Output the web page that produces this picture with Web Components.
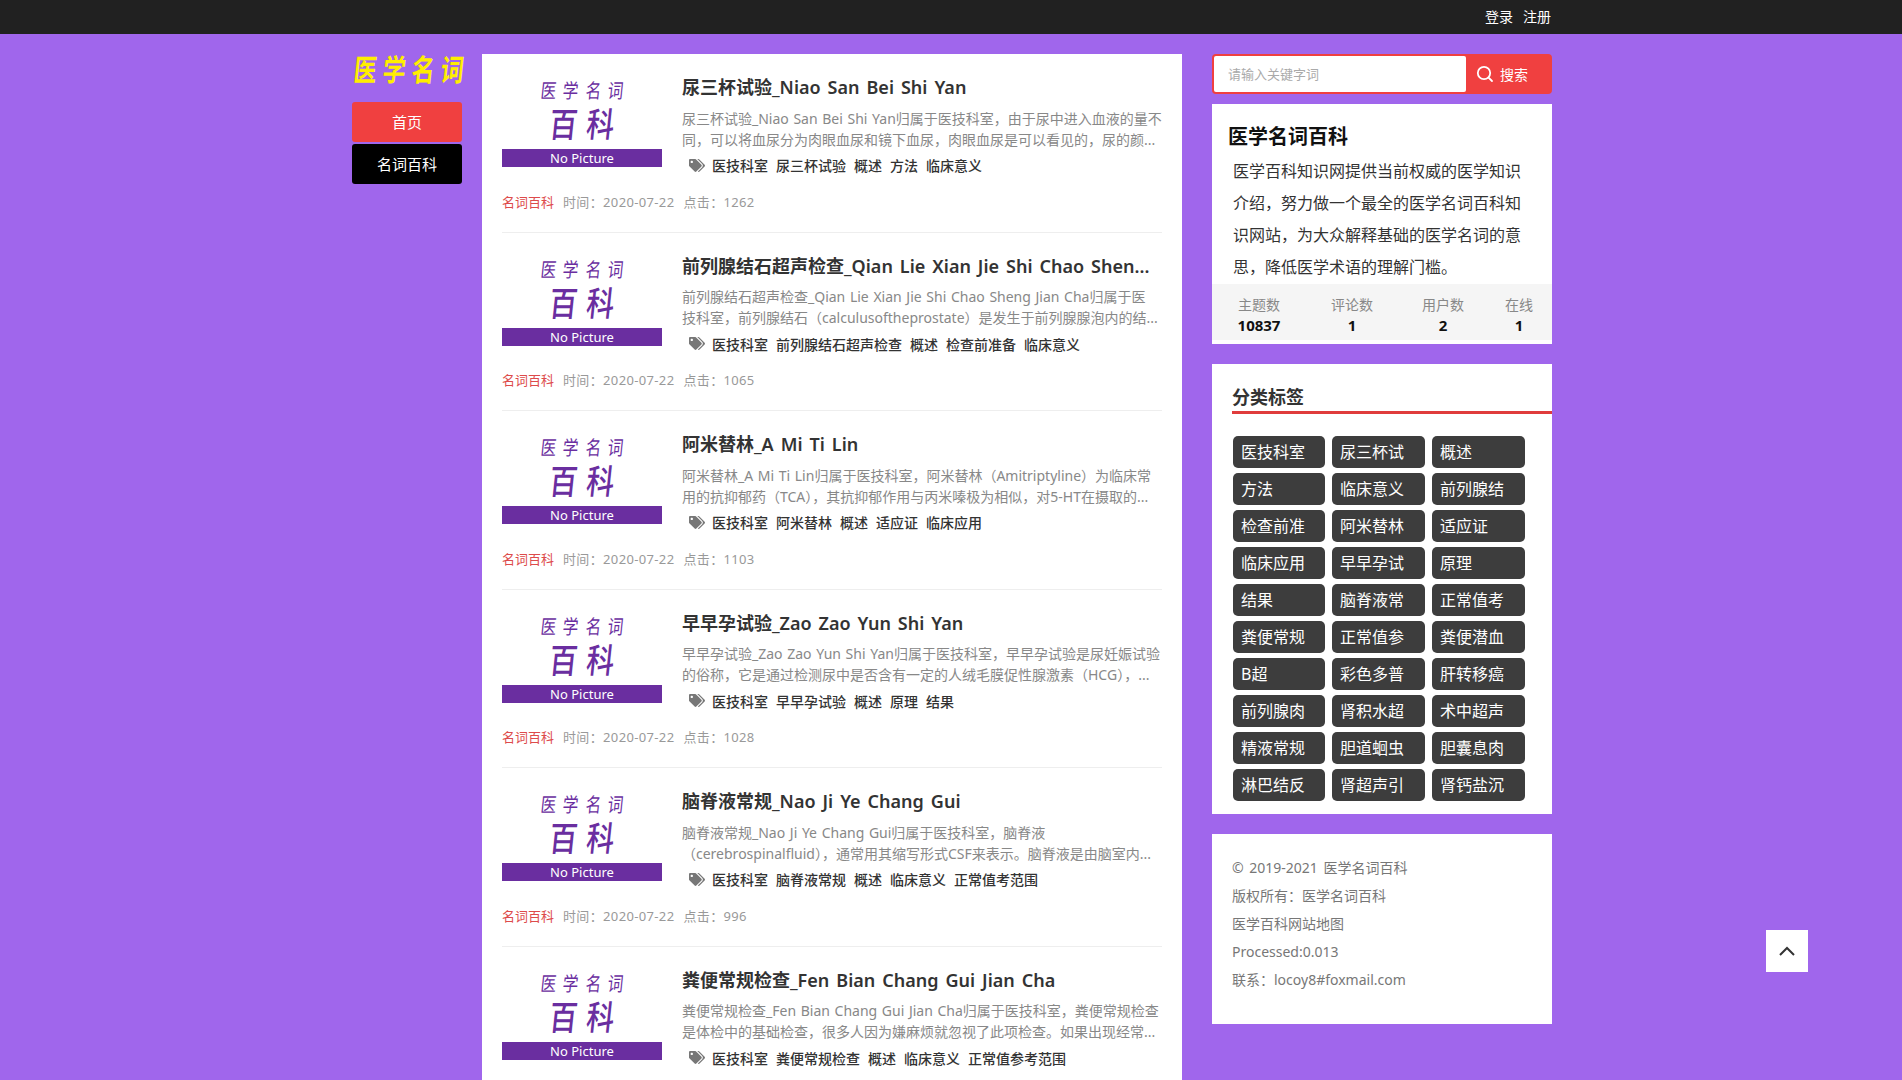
<!DOCTYPE html>
<html lang="zh-CN">
<head>
<meta charset="utf-8">
<title>医学名词百科</title>
<style>
  html, body { margin: 0; height: 100%; overflow: hidden; }
  body {
    background: #a066ec;
    color: #333;
    font-family: "Noto Sans", "Noto Sans CJK SC", sans-serif;
    font-size: 14px;
  }
  .page { display: flex; justify-content: center; padding: 20px 0 0 2px; }
  .cols { display: grid; grid-template-columns: 100px 700px 340px; column-gap: 30px; width: 1200px; }
  .right { display: flex; flex-direction: column; gap: 20px; }
  .right med-search { margin-bottom: -10px; }
</style>
</head>
<body>
<med-topbar></med-topbar>
<div class="page">
  <div class="cols">
    <med-sidebar></med-sidebar>
    <med-list id="list"></med-list>
    <div class="right">
      <med-search></med-search>
      <med-info></med-info>
      <med-tagcloud id="cloud"></med-tagcloud>
      <med-footer></med-footer>
    </div>
  </div>
</div>
<med-backtop></med-backtop>

<script>
function define(name, css, html) {
  customElements.define(name, class extends HTMLElement {
    constructor() {
      super()
      this.attachShadow({ mode: 'open' }).innerHTML = `<style>${css}</style>${html}`
    }
  })
}

define('med-topbar', `
  :host { display: flex; justify-content: flex-end; height: 34px; background: #212121; padding: 0 351px 0 0; }
  a { color: #fff; line-height: 34px; font-size: 14px; margin-left: 10px; text-decoration: none; }
`, `<a href="#">登录</a><a href="#">注册</a>`)

define('med-sidebar', `
  :host { display: block; }
  .logo { display: flex; justify-content: space-between; width: 111px; height: 48px; margin-left: -1px; color: #ffee00; font-size: 28px; line-height: 32px; font-weight: 700; }
  .logo span { display: block; width: 24px; text-align: center; transform: skewX(-6deg) scale(.82, 1.08); }
  a { display: block; width: 110px; height: 40px; line-height: 40px; border-radius: 3px; margin-bottom: 2px; text-align: center; color: #fff; font-size: 15px; text-decoration: none; }
  .on { background: #f04040; }
  .off { background: #000; }
`, `<div class="logo"><span>医</span><span>学</span><span>名</span><span>词</span></div>
  <a class="on" href="#">首页</a><a class="off" href="#">名词百科</a>`)

define('med-thumb', `
  :host { display: flex; flex-direction: column; align-items: center; width: 160px; height: 93px; color: #6a2ea0; }
  .a { display: flex; gap: 3px; margin-top: 7px; height: 20px; font-size: 19px; line-height: 20px; }
  .b { display: flex; gap: 6px; margin-top: 5px; height: 36px; font-size: 31px; line-height: 36px; font-weight: 500; }
  .a span { transform: skewX(-6deg) scale(.82, 1.05); }
  .b span { transform: skewX(-6deg) scale(.9, 1.1); }
  .bar { margin-top: auto; width: 100%; height: 18px; line-height: 18px; background: #6a2ea0; color: #fff; text-align: center; font-size: 13px; }
`, `<div class="a"><span>医</span><span>学</span><span>名</span><span>词</span></div>
  <div class="b"><span>百</span><span>科</span></div>
  <div class="bar">No Picture</div>`)

define('med-article', `
  :host { display: block; padding: 20px 0; border-bottom: 1px solid #eee; }
  :host([nometa]) .meta { display: none; }
  .top { display: grid; grid-template-columns: 160px 480px; column-gap: 20px; }
  .title { height: 26px; line-height: 26px; font-size: 18px; font-weight: 600; word-spacing: 2.3px; color: #333; white-space: nowrap; overflow: hidden; }
  .desc { margin-top: 7.5px; height: 42px; line-height: 21px; font-size: 14px; word-spacing: 1px; color: #888; white-space: nowrap; overflow: hidden; }
  .tags { display: flex; align-items: center; gap: 8px; height: 24px; margin-top: 3.5px; padding-left: 7px; font-size: 14px; font-weight: 500; color: #333; }
  svg { width: 16px; height: 13px; margin-right: -1px; fill: #777; }
  .meta { display: flex; gap: 9px; height: 20px; margin-top: 14.5px; line-height: 20px; font-size: 13px; color: #999; }
  .num { letter-spacing: .35px; }
  .cat { color: #dd4b4b; }
`, `<div class="top">
    <med-thumb></med-thumb>
    <div>
      <div class="title"><slot name="title"></slot></div>
      <div class="desc"><slot name="line1"></slot><br><slot name="line2"></slot></div>
      <div class="tags">
        <svg viewBox="0 0 640 512"><path d="M497.941 225.941L286.059 14.059A48 48 0 0 0 252.118 0H48C21.49 0 0 21.49 0 48v204.118a48 48 0 0 0 14.059 33.941l211.882 211.882c18.744 18.745 49.136 18.746 67.882 0l204.118-204.118c18.745-18.745 18.745-49.137 0-67.882zM112 160c-26.51 0-48-21.49-48-48s21.49-48 48-48 48 21.49 48 48-21.49 48-48 48zm513.941 133.823L421.823 497.941c-18.745 18.745-49.137 18.745-67.882 0l-.36-.36L527.64 323.522c16.999-16.999 26.36-39.6 26.36-63.64s-9.362-46.641-26.36-63.64L331.397 0h48.721a48 48 0 0 1 33.941 14.059l211.882 211.882c18.745 18.745 18.745 49.137 0 67.882z"/></svg>
        <slot name="tag"></slot>
      </div>
    </div>
  </div>
  <div class="meta"><span class="cat">名词百科</span><span class="num"><slot name="time"></slot></span><span class="num"><slot name="hits"></slot></span></div>`)

define('med-list', `
  :host { display: block; background: #fff; padding: 0 20px; height: 1100px; overflow: hidden; }
`, `<slot></slot>`)

define('med-search', `
  :host { display: flex; height: 40px; box-sizing: border-box; border: 2px solid #f04040; border-radius: 4px; background: #f04040; }
  input { flex: 1; min-width: 0; border: 0; outline: 0; border-radius: 2px; padding: 0 14px; font: 13px "Noto Sans", "Noto Sans CJK SC", sans-serif; background: #fff; }
  input::placeholder { color: #aaa; }
  .btn { display: flex; align-items: center; gap: 6px; width: 84px; box-sizing: border-box; padding-left: 10px; color: #fff; font-size: 14px; }
  svg { width: 18px; height: 18px; fill: none; stroke: #fff; stroke-width: 1.8; stroke-linecap: round; }
`, `<input placeholder="请输入关键字词">
  <div class="btn"><svg viewBox="0 0 18 18"><circle cx="8" cy="8" r="6.2"/><path d="M12.6 12.6L16 16"/></svg>搜索</div>`)

define('med-info', `
  :host { display: block; height: 240px; background: #fff; color: #111; overflow: hidden; }
  h3 { margin: 0; padding: 19px 0 0 16px; height: 27px; line-height: 27px; font-size: 20px; font-weight: 700; }
  p { margin: 5px 0 0 21px; width: 290px; height: 129px; line-height: 32px; font-size: 16px; color: #333; }
  .stats { display: grid; grid-template-columns: 94px 92px 90px 62px; height: 56px; background: #f5f5f5; text-align: center; }
  .stats div { padding-top: 10px; }
  span { display: block; line-height: 21px; font-size: 14px; color: #888; }
  b { display: block; line-height: 21px; font-size: 15px; color: #111; }
`, `<h3>医学名词百科</h3>
  <p>医学百科知识网提供当前权威的医学知识介绍，努力做一个最全的医学名词百科知识网站，为大众解释基础的医学名词的意思，降低医学术语的理解门槛。</p>
  <div class="stats">
    <div><span>主题数</span><b>10837</b></div>
    <div><span>评论数</span><b>1</b></div>
    <div><span>用户数</span><b>2</b></div>
    <div><span>在线</span><b>1</b></div>
  </div>`)

define('med-tagcloud', `
  :host { display: block; height: 450px; background: #fff; padding: 20px 0 0 20px; box-sizing: border-box; }
  h3 { margin: 0; height: 27px; line-height: 27px; font-size: 18px; font-weight: 700; color: #333; border-bottom: 3px solid #e03c3c; }
  .grid { display: grid; grid-template-columns: 92px 93px 93px; gap: 5px 7px; margin: 22px 0 0 1px; }
`, `<h3>分类标签</h3><div class="grid"><slot></slot></div>`)

define('med-tag', `
  :host { display: block; height: 32px; line-height: 32px; padding-left: 8px; background: #3d3d3d; border-radius: 5px; color: #fff; font-size: 16px; }
`, `<slot></slot>`)

define('med-footer', `
  :host { display: block; height: 190px; box-sizing: border-box; background: #fff; padding: 20px; line-height: 28px; font-size: 14px; color: #777; }
  .first { word-spacing: 2px; }
`, `<div class="first">© 2019-2021 医学名词百科</div><div>版权所有：医学名词百科</div><div>医学百科网站地图</div><div>Processed:0.013</div><div>联系：locoy8#foxmail.com</div>`)

define('med-backtop', `
  :host { position: fixed; right: 94px; bottom: 108px; display: flex; align-items: center; justify-content: center; width: 42px; height: 42px; background: #fff; }
  svg { width: 18px; height: 12px; fill: none; stroke: #333; stroke-width: 2; }
`, `<svg viewBox="0 0 18 12"><path d="M2 10L9 3l7 7"/></svg>`)

const articles = [
  ['尿三杯试验_Niao San Bei Shi Yan', '尿三杯试验_Niao San Bei Shi Yan归属于医技科室，由于尿中进入血液的量不', '同，可以将血尿分为肉眼血尿和镜下血尿，肉眼血尿是可以看见的，尿的颜...', ['医技科室', '尿三杯试验', '概述', '方法', '临床意义'], 1262],
  ['前列腺结石超声检查_Qian Lie Xian Jie Shi Chao Shen...', '前列腺结石超声检查_Qian Lie Xian Jie Shi Chao Sheng Jian Cha归属于医', '技科室，前列腺结石（calculusoftheprostate）是发生于前列腺腺泡内的结...', ['医技科室', '前列腺结石超声检查', '概述', '检查前准备', '临床意义'], 1065],
  ['阿米替林_A Mi Ti Lin', '阿米替林_A Mi Ti Lin归属于医技科室，阿米替林（Amitriptyline）为临床常', '用的抗抑郁药（TCA），其抗抑郁作用与丙米嗪极为相似，对5-HT在摄取的...', ['医技科室', '阿米替林', '概述', '适应证', '临床应用'], 1103],
  ['早早孕试验_Zao Zao Yun Shi Yan', '早早孕试验_Zao Zao Yun Shi Yan归属于医技科室，早早孕试验是尿妊娠试验', '的俗称，它是通过检测尿中是否含有一定的人绒毛膜促性腺激素（HCG），...', ['医技科室', '早早孕试验', '概述', '原理', '结果'], 1028],
  ['脑脊液常规_Nao Ji Ye Chang Gui', '脑脊液常规_Nao Ji Ye Chang Gui归属于医技科室，脑脊液', '（cerebrospinalfluid），通常用其缩写形式CSF来表示。脑脊液是由脑室内...', ['医技科室', '脑脊液常规', '概述', '临床意义', '正常值考范围'], 996],
  ['粪便常规检查_Fen Bian Chang Gui Jian Cha', '粪便常规检查_Fen Bian Chang Gui Jian Cha归属于医技科室，粪便常规检查', '是体检中的基础检查，很多人因为嫌麻烦就忽视了此项检查。如果出现经常...', ['医技科室', '粪便常规检查', '概述', '临床意义', '正常值参考范围'], null]
]

// the last row's meta line falls below the fold
document.getElementById('list').innerHTML = articles.map(([title, line1, line2, tags, hits]) => `
  <med-article ${hits === null ? 'nometa' : ''}>
    <span slot="title">${title}</span>
    <span slot="line1">${line1}</span>
    <span slot="line2">${line2}</span>
    ${tags.map(t => `<span slot="tag">${t}</span>`).join('')}
    ${hits === null ? '' : `<span slot="time">时间：2020-07-22</span><span slot="hits">点击：${hits}</span>`}
  </med-article>`).join('')

const cloud = ['医技科室', '尿三杯试', '概述', '方法', '临床意义', '前列腺结', '检查前准', '阿米替林', '适应证', '临床应用', '早早孕试', '原理', '结果', '脑脊液常', '正常值考', '粪便常规', '正常值参', '粪便潜血', 'B超', '彩色多普', '肝转移癌', '前列腺肉', '肾积水超', '术中超声', '精液常规', '胆道蛔虫', '胆囊息肉', '淋巴结反', '肾超声引', '肾钙盐沉']
document.getElementById('cloud').innerHTML = cloud.map(t => `<med-tag>${t}</med-tag>`).join('')
</script>
</body>
</html>
